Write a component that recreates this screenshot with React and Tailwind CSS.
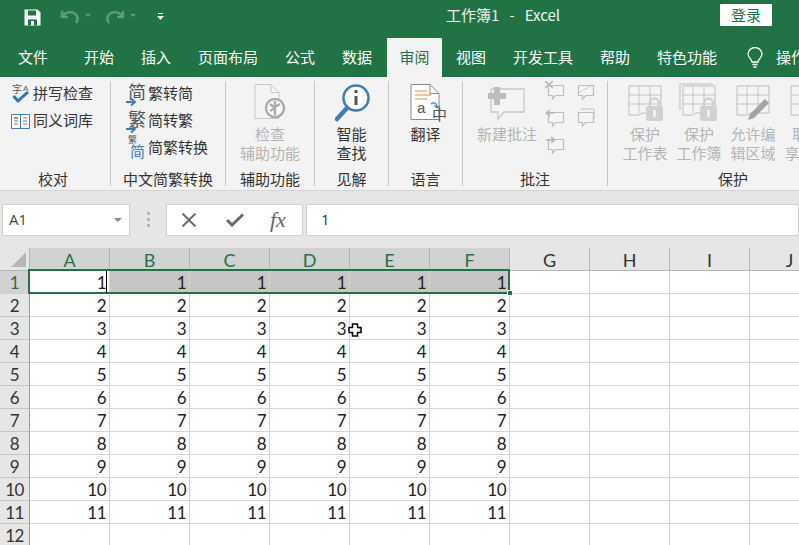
import React from "react";

const cjk = '"Noto Sans CJK SC", "Noto Sans", sans-serif';
const tabs = [
  ["文件", "w-[69px] pr-[3px]"],
  ["开始", "w-[60px]"],
  ["插入", "w-[54px]"],
  ["页面布局", "w-[90px]"],
  ["公式", "w-[54px]"],
  ["数据", "w-[60px]"],
  ["审阅", "w-[55px]", true],
  ["视图", "w-[58px]"],
  ["开发工具", "w-[86px]"],
  ["帮助", "w-[58px]"],
  ["特色功能", "w-[86px]"],
];
const cols = ["A", "B", "C", "D", "E", "F", "G", "H", "I", "J"];
const rows = [1, 2, 3, 4, 5, 6, 7, 8, 9, 10, 11, 12];

function Doc({ children }) {
  return (
    <svg className="overflow-visible" width="44" height="40" viewBox="0 0 44 40" fill="none">
      <path d="M7 1.500h19l9 9v26H7z" fill="#fff" stroke="#8a8a8a" />
      <path d="M26 1.500v9h9" stroke="#8a8a8a" />
      {children}
    </svg>
  );
}

function Bubble({ x = 0, y = 0 }) {
  return (
    <path
      transform={`translate(${x} ${y})`}
      d="M1.500 1.500h15v10h-8l-3 3.500v-3.500h-4z"
      fill="#f6f3f6"
      stroke="#bdbdbd"
      strokeWidth="1.200"
    />
  );
}

function SmallBubble({ mark }) {
  return (
    <svg width="20" height="20" viewBox="0 0 20 20" fill="none">
      <Bubble x={2} y={3} />
      {mark === "x" && <path d="M0 0l8 7M8 0L0 7" stroke="#b5b5b5" strokeWidth="1.600" />}
      {mark === "l" && <path d="M9 5H2m3-3L1.500 5 5 8" stroke="#b5b5b5" strokeWidth="1.600" />}
      {mark === "r" && <path d="M1 5h8M6 2l3.500 3L6 8" stroke="#b5b5b5" strokeWidth="1.600" />}
      {mark === "d" && <path d="M3 12L18 4" stroke="#bdbdbd" strokeDasharray="2 1" />}
      {mark === "m" && <path d="M6 1h13v10" stroke="#bdbdbd" />}
    </svg>
  );
}

function Sheet({ lock, stack, pen }) {
  return (
    <svg width="40" height="40" viewBox="0 0 40 40" fill="none">
      {stack && <path d="M1 27V1h33" stroke="#bdbdbd" />}
      <path d="M4 3h32v27H17l-3 2H4z" fill="#f6f3f6" stroke="#bdbdbd" />
      <path d="M4 12h32M4 21h32M14 3v27M25 3v27" stroke="#c4c4c4" />
      {lock && (
        <g>
          <rect x="21" y="23" width="17" height="15" rx="2" fill="#d3d0d3" />
          <path d="M25 23v-3a4.500 4.500 0 0 1 9 0v3" stroke="#d3d0d3" strokeWidth="2.500" />
          <rect x="28.500" y="27" width="2" height="7" fill="#fff" />
        </g>
      )}
      {pen && <path d="M15 37l2-6 15-15 4 4-15 15z" fill="#a3a3a3" />}
    </svg>
  );
}

function RowButton({ icon, label, w = "w-[25px]" }) {
  return (
    <div className="flex h-[27px] items-center">
      <div className={`flex shrink-0 justify-center ${w}`}>{icon}</div>
      <span className="whitespace-nowrap">{label}</span>
    </div>
  );
}

function BigButton({ icon, lines, off, w = "" }) {
  return (
    <div className={`flex flex-col items-center ${w}`}>
      <div className="flex h-[43px] items-center justify-center">{icon}</div>
      {lines.map((l) => (
        <div key={l} className={`whitespace-nowrap leading-[19px] ${off ? "text-[#b4b4b4]" : "text-[#333]"}`}>
          {l}
        </div>
      ))}
    </div>
  );
}

function Group({ w, label, children, last, labelClass = "" }) {
  return (
    <div className={`flex h-[105px] shrink-0 flex-col ${w} ${last ? "" : "border-r border-[#c6c6c6]"}`}>
      <div className="min-h-0 flex-1">{children}</div>
      <div className={`h-[14px] text-center leading-[14px] text-[#333] ${labelClass}`}>{label}</div>
    </div>
  );
}

function CnIcon({ ch, arrow }) {
  return (
    <svg className="overflow-visible" width="21" height="24" viewBox="0 0 21 24" fill="none">
      <text x="2" y="17" fontSize="18" fill="#555" style={{ fontFamily: cjk }}>
        {ch}
      </text>
      {arrow && <path d="M0 20h8M5 16.500l4 3.500-4 3.500" stroke="#3f7cb8" strokeWidth="1.800" />}
    </svg>
  );
}

function MixedIcon() {
  return (
    <svg className="overflow-visible" width="21" height="24" viewBox="0 0 21 24" fill="none">
      <text x="2" y="7" fontSize="9" fill="#555" style={{ fontFamily: cjk }}>
        繁
      </text>
      <text x="4" y="21" fontSize="15" fill="#3f7cb8" style={{ fontFamily: cjk }}>
        简
      </text>
    </svg>
  );
}

export default function App() {
  return (
    <div className="relative h-[545px] w-[799px] overflow-hidden bg-white text-[15px]" style={{ fontFamily: cjk }}>
      {/* title bar */}
      <div className="flex h-[38px] items-center bg-[#217346] pb-[8px] text-white">
        <div className="mt-[4px] flex w-[446px] shrink-0 items-center pl-[24px]">
          <svg width="17" height="17" viewBox="0 0 17 17">
            <path d="M0.500 0.500h13l3 3v13H0.500z" fill="#fff" />
            <path d="M4 1.500h8v5H4z" fill="#217346" />
            <path d="M4 10.500h9v6H4z" fill="#217346" />
            <path d="M7 12h3v4.500H7z" fill="#fff" />
          </svg>
          <svg className="ml-[19px]" width="32" height="18" viewBox="0 0 32 18" fill="none">
            <path d="M2 3v6h6M2.500 9C5 3 14 2.500 17 8c1.200 2.500.5 5-1 7" stroke="#5c9c7c" strokeWidth="2.500" />
            <path d="M25 6h6l-3 3z" fill="#5c9c7c" />
          </svg>
          <svg className="ml-[13px]" width="32" height="18" viewBox="0 0 32 18" fill="none">
            <path d="M18 3v6h-6M17.500 9C15 3 6 2.500 3 8c-1.200 2.500-.5 5 1 7" stroke="#5c9c7c" strokeWidth="2.500" />
            <path d="M25 6h6l-3 3z" fill="#5c9c7c" />
          </svg>
          <svg className="ml-[20px]" width="7" height="8" viewBox="0 0 7 8">
            <path d="M1 0h5v1H1zM0 3h7L3.500 7z" fill="#fff" />
          </svg>
        </div>
        <div className="w-[274px] shrink-0 whitespace-pre text-[15px] text-[#eef5f1]">工作簿1   -   Excel</div>
        <div className="flex h-[22px] w-[52px] items-center justify-center rounded-[1px] bg-white text-[#217346]">
          登录
        </div>
      </div>

      {/* tabs */}
      <div className="flex h-[39px] items-center bg-[#217346] text-white">
        {tabs.map(([t, w, on]) => (
          <div
            key={t}
            className={`flex h-full shrink-0 items-center justify-center ${w} ${on ? "bg-[#f3f3f3] text-[#217346]" : ""}`}
          >
            {t}
          </div>
        ))}
        <svg className="ml-[17px] shrink-0" width="16" height="21" viewBox="0 0 16 21" fill="none">
          <path d="M5 15c0-3-4-4-4-8a7 6.500 0 0 1 14 0c0 4-4 5-4 8z" stroke="#fff" strokeWidth="1.300" />
          <path d="M5.500 17.500h5M6.500 20h3" stroke="#fff" strokeWidth="1.300" />
        </svg>
        <div className="ml-[13px] whitespace-nowrap">操作说明</div>
      </div>

      {/* ribbon */}
      <div className="flex h-[113px] bg-[#f3f3f3] pt-[4px] text-[#333]">
        <Group w="w-[111px]" label="校对" labelClass="pr-[4px]">
          <div className="-mt-[1px] pl-[8px]">
            <RowButton
              icon={
                <svg className="overflow-visible" width="20" height="21" viewBox="0 0 20 21" fill="none">
                  <text x="1" y="10" fontSize="10" fill="#555" style={{ fontFamily: cjk }}>字</text>
                  <text x="12" y="8" fontSize="8" fill="#555" style={{ fontFamily: '"Liberation Sans", sans-serif' }}>A</text>
                  <path d="M2.500 13l4.500 5 10-9" stroke="#2f74b5" strokeWidth="3" />
                </svg>
              }
              label="拼写检查"
            />
            <RowButton
              icon={
                <svg width="19" height="16" viewBox="0 0 19 16" fill="none">
                  <path d="M.5 1.500h18v14H.5z" fill="#fff" stroke="#3f7cb8" />
                  <path d="M9.500 1.500v14" stroke="#3f7cb8" />
                  <path d="M3 5h4" stroke="#d2492a" strokeWidth="1.500" />
                  <path d="M3 8h4M3 11h4M12 5h4M12 8h4M12 11h4" stroke="#7a7a7a" />
                </svg>
              }
              label="同义词库"
            />
          </div>
        </Group>
        <Group w="w-[115px]" label="中文简繁转换">
          <div className="-mt-[1px] pl-[13px]">
            <RowButton w="w-[24px]" icon={<CnIcon ch="简" arrow />} label="繁转简" />
            <RowButton w="w-[24px]" icon={<CnIcon ch="繁" arrow />} label="简转繁" />
            <RowButton w="w-[24px]" icon={<MixedIcon />} label="简繁转换" />
          </div>
        </Group>
        <Group w="w-[89px]" label="辅助功能">
          <BigButton
            off
            icon={
              <svg width="36" height="38" viewBox="0 0 36 38" fill="none">
                <path d="M3 .5h16l8 8v26H3z" fill="#f6f3f6" stroke="#c8c8c8" />
                <path d="M19 .5v8h8" stroke="#c8c8c8" />
                <circle cx="23" cy="24" r="9" fill="#fff" stroke="#ababab" strokeWidth="2.500" />
                <path d="M23 17v6l5-3M23 24l-5 3M23 24v7M23 24l-5-4" stroke="#ababab" strokeWidth="2.500" />
              </svg>
            }
            lines={["检查", "辅助功能"]}
          />
        </Group>
        <Group w="w-[74px]" label="见解">
          <BigButton
            icon={
              <svg width="38" height="40" viewBox="0 0 38 40" fill="none">
                <circle cx="23" cy="15" r="12.500" fill="#fff" stroke="#3f7cb8" strokeWidth="2.500" />
                <path d="M14 25L4 36" stroke="#3f7cb8" strokeWidth="4.500" strokeLinecap="round" />
                <rect x="21.500" y="13" width="3" height="9" fill="#555" />
                <rect x="21.500" y="7" width="3" height="3" fill="#555" />
              </svg>
            }
            lines={["智能", "查找"]}
          />
        </Group>
        <Group w="w-[74px]" label="语言">
          <BigButton
            icon={
              <Doc>
                <path d="M11 8h12M11 12h16M11 16h12" stroke="#e8893a" />
                <text x="13" y="30" fontSize="15" fill="#555" style={{ fontFamily: '"Liberation Sans", sans-serif' }}>a</text>
                <text x="28" y="37" fontSize="15" fill="#555" style={{ fontFamily: cjk }}>中</text>
                <path d="M27 21c3-2 6-1 6 3m-2.500-1.500L33 25l2.500-2.500" stroke="#3f7cb8" strokeWidth="1.200" />
              </Doc>
            }
            lines={["翻译"]}
          />
        </Group>
        <Group w="w-[145px]" label="批注">
          <div className="flex pl-[13px]">
            <BigButton
              off
              w="w-[62px]"
              icon={
                <svg width="40" height="36" viewBox="0 0 40 36" fill="none">
                  <path d="M4 4h33v23H17l-6 7v-7H4z" fill="#f6f3f6" stroke="#c8c8c8" strokeWidth="1.300" />
                  <path d="M7 2h6v6h6v6h-6v6H7v-6H1V8h6z" fill="#bdbdbd" />
                </svg>
              }
              lines={["新建批注"]}
            />
            <div className="ml-[7px] grid w-[60px] grid-cols-2 content-start gap-y-[7px]">
              <SmallBubble mark="x" />
              <SmallBubble mark="d" />
              <SmallBubble mark="l" />
              <SmallBubble mark="m" />
              <SmallBubble mark="r" />
            </div>
          </div>
        </Group>
        <Group w="w-[250px]" label="保护" last>
          <div className="flex pl-[10px]">
            <BigButton off w="w-[54px] shrink-0" icon={<Sheet lock />} lines={["保护", "工作表"]} />
            <BigButton off w="w-[54px] shrink-0" icon={<Sheet lock stack />} lines={["保护", "工作簿"]} />
            <BigButton off w="w-[54px] shrink-0" icon={<Sheet pen />} lines={["允许编", "辑区域"]} />
            <BigButton off w="w-[54px] shrink-0" icon={<Sheet />} lines={["取消", "享工作"]} />
          </div>
        </Group>
      </div>

      {/* formula bar */}
      <div className="flex h-[58px] items-center border-t border-[#d5d5d5] bg-[#e6e6e6] pl-[2px]">
        <div
          className="flex h-[32px] w-[128px] shrink-0 items-center justify-between border border-[#d0d0d0] bg-white pl-[6px] pr-[7px] text-[15px] text-[#444]"
          style={{ fontFamily: '"Open Sans", sans-serif' }}
        >
          A1
          <span className="h-0 w-0 border-x-[4px] border-t-[4px] border-x-transparent border-t-[#8a8a8a]" />
        </div>
        <div className="flex w-[36px] shrink-0 flex-col items-center gap-[3px]">
          <span className="h-[3px] w-[3px] bg-[#b5b5b5]" />
          <span className="h-[3px] w-[3px] bg-[#b5b5b5]" />
          <span className="h-[3px] w-[3px] bg-[#b5b5b5]" />
        </div>
        <div className="flex h-[32px] w-[137px] shrink-0 items-center border border-[#d0d0d0] bg-white">
          <svg className="ml-[14px]" width="16" height="14" viewBox="0 0 16 14" fill="none">
            <path d="M1.500 0.500l13 13M14.500 0.500l-13 13" stroke="#6b6b6b" strokeWidth="2" />
          </svg>
          <svg className="ml-[29px]" width="18" height="14" viewBox="0 0 18 14" fill="none">
            <path d="M1 7l5 5L17 1.500" stroke="#6b6b6b" strokeWidth="3" />
          </svg>
          <span
            className="ml-[26px] text-[22px] italic leading-none text-[#666]"
            style={{ fontFamily: '"Liberation Serif", serif' }}
          >
            fx
          </span>
        </div>
        <div
          className="ml-[3px] flex h-[32px] flex-1 items-center border border-[#d0d0d0] bg-white pl-[14px] text-[15px] text-[#333]"
          style={{ fontFamily: '"Open Sans", sans-serif' }}
        >
          1
        </div>
      </div>

      {/* sheet */}
      <div
        className="relative grid grid-cols-[30px_repeat(10,80px)] auto-rows-[23px] text-[17px] text-[#222]"
        style={{ fontFamily: "Lato, sans-serif" }}
      >
        <div className="flex items-end justify-end border-b border-r border-[#b5b5b5] bg-[#e6e6e6] pb-[3px] pr-[3px]">
          <span className="h-0 w-0 border-b-[15px] border-l-[15px] border-b-[#b7b7b7] border-l-transparent" />
        </div>
        {cols.map((c, i) => (
          <div
            key={c}
            className={`flex items-center justify-center border-b border-r border-[#b5b5b5] pt-[2px] text-[18px] ${
              i < 6 ? "bg-[#d2d2d2] text-[#217346]" : "bg-[#e6e6e6] text-[#333]"
            }`}
          >
            {c}
          </div>
        ))}
        {rows.map((r) => (
          <React.Fragment key={r}>
            <div
              className={`flex items-center justify-center border-b border-r pt-[2px] tracking-[-0.5px] ${
                r === 1
                  ? "border-b-[#d2d2d2] border-r-[#b5b5b5] bg-[#d2d2d2] text-[#217346]"
                  : "border-b-[#c6c6c6] border-r-[#9a9a9a] bg-[#e6e6e6] text-[#333]"
              }`}
            >
              {r}
            </div>
            {cols.map((c, i) => (
              <div
                key={c}
                className={`flex items-center justify-end border-b border-r border-[#d4d4d4] pr-[3px] pt-[2px] tracking-[-0.5px] ${
                  r === 1 && i > 0 && i < 6 ? "border-[#b9b9b9] bg-[#c6c6c6]" : ""
                }`}
              >
                {i < 6 && r < 12 ? r : ""}
              </div>
            ))}
          </React.Fragment>
        ))}

        {/* selection over row 1 */}
        <div className="absolute left-[28px] top-[21px] h-[25px] w-[482px] border-2 border-[#217346]" />
        <div className="absolute left-[106px] top-[23px] h-[22px] w-px bg-black" />
        <div className="absolute left-[507px] top-[42px] h-[6px] w-[6px] border border-white bg-[#217346]" />

        {/* mouse cursor */}
        <svg className="absolute left-[348px] top-[75px]" width="14" height="14" viewBox="0 0 14 14">
          <path d="M4.500 1h5v3.500H13v5H9.500V13h-5V9.500H1v-5h3.500z" fill="#fff" stroke="#000" strokeWidth="1.500" />
        </svg>
      </div>
    </div>
  );
}
